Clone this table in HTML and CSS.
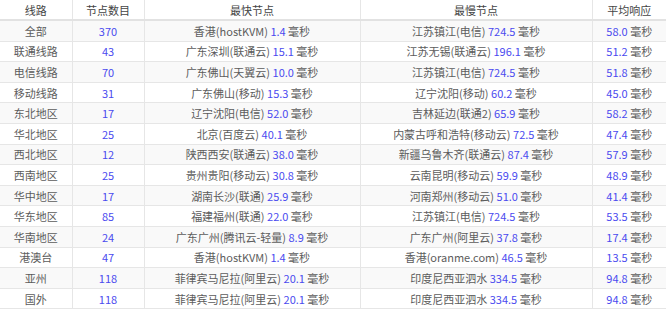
FILE: index.html
```html
<!DOCTYPE html>
<html lang="zh-CN">
<head>
<meta charset="utf-8">
<link rel="stylesheet" href="styles.css">
</head>
<body>
<table class="speed">
<colgroup>
<col class="c1"><col class="c2"><col class="c3"><col class="c4"><col class="c5">
</colgroup>
<thead>
<tr><th>线路</th><th>节点数目</th><th>最快节点</th><th>最慢节点</th><th>平均响应</th></tr>
</thead>
<tbody>
<tr><td>全部</td><td class="n">370</td><td>香港(hostKVM) <span class="n">1.4</span> 毫秒</td><td>江苏镇江(电信) <span class="n">724.5</span> 毫秒</td><td><span class="n">58.0</span> 毫秒</td></tr>
<tr><td>联通线路</td><td class="n">43</td><td>广东深圳(联通云) <span class="n">15.1</span> 毫秒</td><td>江苏无锡(联通云) <span class="n">196.1</span> 毫秒</td><td><span class="n">51.2</span> 毫秒</td></tr>
<tr><td>电信线路</td><td class="n">70</td><td>广东佛山(天翼云) <span class="n">10.0</span> 毫秒</td><td>江苏镇江(电信) <span class="n">724.5</span> 毫秒</td><td><span class="n">51.8</span> 毫秒</td></tr>
<tr><td>移动线路</td><td class="n">31</td><td>广东佛山(移动) <span class="n">15.3</span> 毫秒</td><td>辽宁沈阳(移动) <span class="n">60.2</span> 毫秒</td><td><span class="n">45.0</span> 毫秒</td></tr>
<tr><td>东北地区</td><td class="n">17</td><td>辽宁沈阳(电信) <span class="n">52.0</span> 毫秒</td><td>吉林延边(联通2) <span class="n">65.9</span> 毫秒</td><td><span class="n">58.2</span> 毫秒</td></tr>
<tr><td>华北地区</td><td class="n">25</td><td>北京(百度云) <span class="n">40.1</span> 毫秒</td><td>内蒙古呼和浩特(移动云) <span class="n">72.5</span> 毫秒</td><td><span class="n">47.4</span> 毫秒</td></tr>
<tr><td>西北地区</td><td class="n">12</td><td>陕西西安(联通云) <span class="n">38.0</span> 毫秒</td><td>新疆乌鲁木齐(联通云) <span class="n">87.4</span> 毫秒</td><td><span class="n">57.9</span> 毫秒</td></tr>
<tr><td>西南地区</td><td class="n">25</td><td>贵州贵阳(移动云) <span class="n">30.8</span> 毫秒</td><td>云南昆明(移动云) <span class="n">59.9</span> 毫秒</td><td><span class="n">48.9</span> 毫秒</td></tr>
<tr><td>华中地区</td><td class="n">17</td><td>湖南长沙(联通) <span class="n">25.9</span> 毫秒</td><td>河南郑州(移动云) <span class="n">51.0</span> 毫秒</td><td><span class="n">41.4</span> 毫秒</td></tr>
<tr><td>华东地区</td><td class="n">85</td><td>福建福州(联通) <span class="n">22.0</span> 毫秒</td><td>江苏镇江(电信) <span class="n">724.5</span> 毫秒</td><td><span class="n">53.5</span> 毫秒</td></tr>
<tr><td>华南地区</td><td class="n">24</td><td>广东广州(腾讯云-轻量) <span class="n">8.9</span> 毫秒</td><td>广东广州(阿里云) <span class="n">37.8</span> 毫秒</td><td><span class="n">17.4</span> 毫秒</td></tr>
<tr><td>港澳台</td><td class="n">47</td><td>香港(hostKVM) <span class="n">1.4</span> 毫秒</td><td>香港(oranme.com) <span class="n">46.5</span> 毫秒</td><td><span class="n">13.5</span> 毫秒</td></tr>
<tr><td>亚州</td><td class="n">118</td><td>菲律宾马尼拉(阿里云) <span class="n">20.1</span> 毫秒</td><td>印度尼西亚泗水 <span class="n">334.5</span> 毫秒</td><td><span class="n">94.8</span> 毫秒</td></tr>
<tr><td>国外</td><td class="n">118</td><td>菲律宾马尼拉(阿里云) <span class="n">20.1</span> 毫秒</td><td>印度尼西亚泗水 <span class="n">334.5</span> 毫秒</td><td><span class="n">94.8</span> 毫秒</td></tr>
</tbody>
</table>
</body>
</html>
```
FILE: styles.css
```css
html, body {
  margin: 0;
  padding: 0;
  background: #fff;
}
.speed {
  width: 666px;
  border-collapse: collapse;
  table-layout: fixed;
  font-family: "Noto Sans CJK SC", "Noto Sans", sans-serif;
  font-size: 11px;
  color: #5c5c5c;
}
.c1 { width: 72px; }
.c2 { width: 72px; }
.c3 { width: 216px; }
.c4 { width: 232px; }
.c5 { width: 74px; }
.speed th, .speed td {
  text-align: center;
  padding: 0;
  white-space: nowrap;
  overflow: hidden;
  border-right: 1px solid #e6e6e6;
  border-bottom: 1px solid #e6e6e6;
}
.speed th:last-child, .speed td:last-child {
  border-right: none;
}
.speed th {
  font-weight: normal;
  color: #444;
  height: 18px;
  padding-top: 1px;
  border-bottom: 2px solid #e2e2e2;
}
.speed td {
  height: 19.6px;
}
.speed tbody tr:nth-child(odd) {
  background: #f9f9f9;
}
.n {
  color: #4a4aef;
}
```
